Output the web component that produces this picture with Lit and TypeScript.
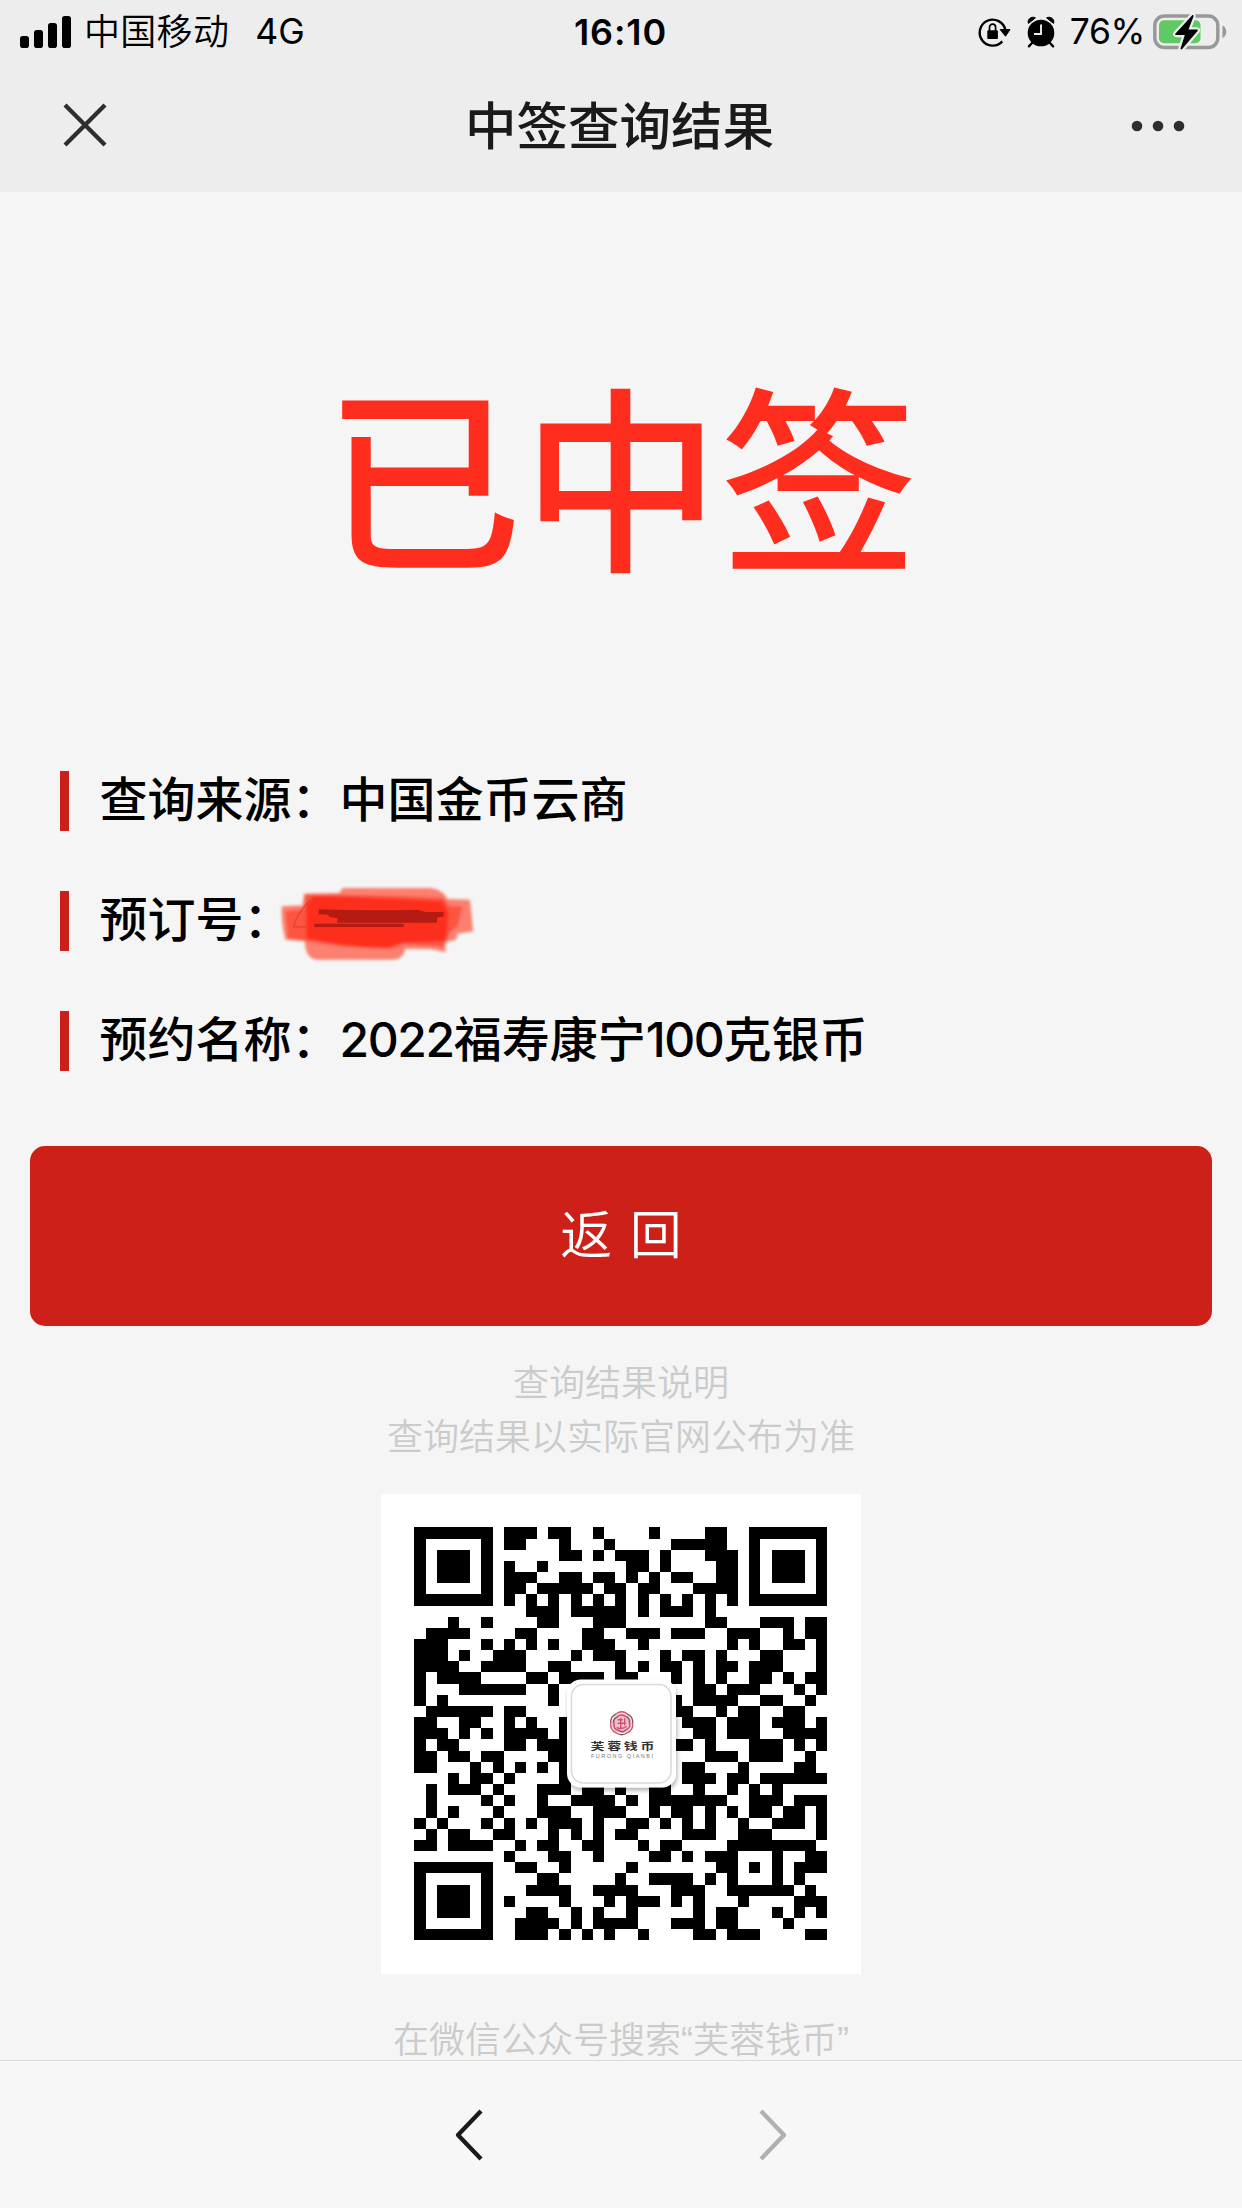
import { LitElement, html, css, svg } from "lit";
import { customElement, property } from "lit/decorators.js";

/* Dark modules of each QR row, written as column numbers and ranges. */
const QR_ROWS: string[] = [
  "0-6 8-10 12-13 16 21 26-27 30-36",
  "0 6 8-9 13 17 23-27 30 36",
  "0 2-4 6 13-14 16 18-20 22 26-28 30 32-34 36",
  "0 2-4 6 8 11 19-20 22 27-28 30 32-34 36",
  "0 2-4 6 8-10 13-14 16-17 19 21 23-24 27-28 30 32-34 36",
  "0 6 8-9 11-15 17-18 20-21 25-28 30 36",
  "0-6 8 10 12 14 16 18 20 22 24 26 28 30-36",
  "10-12 14-18 20 22-24 26",
  "3 6 11-12 16-18 26-27 31-33 35-36",
  "1-4 9-10 15-16 19-21 23-25 28-30 33 35-36",
  "0-2 6 8 10 12 15-17 20 28 30 33-34 36",
  "0-2 4 7-9 14 16-18 22 24-25 27 31-32 36",
  "0-3 6-9 12-13 18 20 22-23 25 27-28 30-32 36",
  "0 2-5 10-11 13-16 18-19 23 25 27 30-31 33 35-36",
  "0 4-9 12 25-26 28-30 34 36",
  "0 2 12 23 25-28 31-32 35",
  "1-6 8-9 23-24 27 29-30 33-34",
  "0-1 4-5 8 10 13 24-26 28-30 32-34 36",
  "0-2 4 6 8-11 13 25-26 28-30 33-36",
  "0 2-3 8-9 11-13 23-24 26 30-32 34 36",
  "0-1 3-4 6-7 12-13 26-28 30-32 35",
  "0-1 5 7 9 11 13 24-25 29 34-35",
  "3 5-6 8 13 24-26 28-29 31-36",
  "1 3-5 7 11-13 15-16 18 21-22 25 28 30 32",
  "1 6 8 11 14-17 19 21-27 30-32 34-36",
  "1 3 7 11-13 16-18 21 23-24 26 28 30-31 33-34 36",
  "0 2 6 8 10 12-14 16 19-20 22 24 26 29 32-34 36",
  "1 3-4 7-8 12 14 16 18-19 24-26 29-31 36",
  "0-1 3-6 9 11-12 15-16 20 22-23 28-35",
  "8 12-13 16 21-22 24 26-28 32 35-36",
  "0-6 9-10 13 19 27-28 30 32 34-36",
  "0 6 11-12 18 21-24 26 28 32 34",
  "0 2-4 6 10-13 16-19 23-25 28-33 35",
  "0 2-4 6 8 13 17 19-21 23 25 29 34-36",
  "0 2-4 6 10-11 14 16 19 25 27-28 32 34 36",
  "0 6 9-12 14 16-19 23-25 27-28 33",
  "0-6 9-11 13 15 17 20 25-26 28-30 35-36",
];

const qrPath = QR_ROWS.map((row, y) =>
  row
    .split(" ")
    .map((run) => {
      const [a, b = a] = run.split("-").map(Number);
      return `M${a} ${y}h${b - a + 1}v1h-${b - a + 1}z`;
    })
    .join("")
).join("");

@customElement("status-bar")
class StatusBar extends LitElement {
  static styles = css`
    :host {
      display: grid;
      grid-template-columns: 1fr auto 1fr;
      align-items: center;
      height: 62px;
      padding: 0 15px 0 20px;
      color: #000;
      font: 400 36px/62px Inter, "Noto Sans CJK SC", sans-serif;
    }
    span, .time { padding-top: 1px; }
    .left, .right { display: flex; align-items: center; }
    .right { justify-content: flex-end; }
    .signal { margin-right: 13px; }
    .carrier { font-weight: 350; letter-spacing: 0.3px; }
    .net { margin-left: 26px; font-size: 35.5px; }
    .time { font-weight: 600; font-size: 36px; letter-spacing: 0.9px; margin-left: -6px; }
    .lock { margin-right: 16px; }
    .alarm { margin-right: 15px; }
    .percent { font-size: 35.5px; letter-spacing: -0.4px; margin-right: 8px; }
    svg { display: block; flex: none; }
  `;
  render() {
    return html`
      <div class="left">
        <svg class="signal" width="51" height="34" viewBox="0 0 51 34">
          <rect x="0" y="21" width="9" height="12" rx="2.8" />
          <rect x="14" y="15" width="9" height="18" rx="2.8" />
          <rect x="28" y="8" width="9" height="25" rx="2.8" />
          <rect x="42" y="1" width="9" height="32" rx="2.8" />
        </svg>
        <span class="carrier">中国移动</span>
        <span class="net">4G</span>
      </div>
      <div class="time">16:10</div>
      <div class="right">
        <svg class="lock" width="34" height="34" viewBox="0 0 34 34">
          <path d="M25.3 26.4A13 13 0 1 1 28.4 15" fill="none" stroke="#000" stroke-width="2.400" />
          <path d="M23.200 14.600H33L28.500 21.200z" stroke="#000" stroke-linejoin="round" />
          <rect x="10.300" y="15.300" width="10.600" height="8.800" rx="1.200" />
          <path d="M12.500 16V12.200a3.050 3.050 0 0 1 6.100 0v3.800" fill="none" stroke="#000" stroke-width="1.700" />
        </svg>
        <svg class="alarm" width="28" height="32" viewBox="0 0 28 32">
          <circle cx="14" cy="17" r="13.300" />
          <path d="M1.500 7.400C-.3 3.600 4.600-.3 8.400 1.900ZM26.500 7.400C28.300 3.600 23.400-.3 19.600 1.900Z" stroke="#000" stroke-linejoin="round" />
          <path d="M5.500 26.500 1.900 30.300M22.500 26.500 26.100 30.300" stroke="#000" stroke-width="2.400" stroke-linecap="round" />
          <path d="M14 8.500V18H7" fill="none" stroke="#ededed" stroke-width="1.900" />
        </svg>
        <span class="percent">76%</span>
        <svg width="74" height="38" viewBox="0 0 74 38">
          <rect x="1.800" y="3" width="63" height="31.500" rx="9.500" fill="none" stroke="#98989b" stroke-width="3.400" />
          <rect x="6" y="7.200" width="41.500" height="23" rx="5" fill="#5fca63" />
          <path d="M69.500 12.500c5 2 5 10.500 0 12.500z" fill="#98989b" />
          <path d="M39 2.500 22.500 20.500c-.6.8-.4 1.400.6 1.400h8.700L27.600 35.300c-.3 1.200.8 1.500 1.600.7L44.500 18c.6-.8.3-1.500-.6-1.500h-8.400l4.900-12.800c.5-1.400-.5-2.100-1.400-1.200z"
            stroke="#ededed" stroke-width="4.500" paint-order="stroke" />
        </svg>
      </div>
    `;
  }
}

@customElement("title-bar")
class TitleBar extends LitElement {
  static styles = css`
    :host {
      display: grid;
      grid-template-columns: 1fr auto 1fr;
      align-items: center;
      height: 130px;
      padding: 0 57px 0 63px;
      box-sizing: border-box;
      color: #1a1a1a;
    }
    h1 {
      margin: 0 0 8px -9px;
      font: 500 51.500px/70px "Noto Sans CJK SC", sans-serif;
    }
    svg { display: block; margin-bottom: 4px; }
    .more { justify-self: end; margin-bottom: 3px; }
  `;
  render() {
    return html`
      <svg width="44" height="44" viewBox="0 0 44 44">
        <path d="M2 2 42 42M42 2 2 42" stroke="#2e2e2e" stroke-width="4.300" />
      </svg>
      <h1>中签查询结果</h1>
      <svg class="more" width="54" height="12" viewBox="0 0 54 12">
        ${[6, 27, 48].map((x) => svg`<circle cx=${x} cy="6" r="5.300" fill="#2e2e2e" />`)}
      </svg>
    `;
  }
}

@customElement("info-row")
class InfoRow extends LitElement {
  @property() label = "";
  @property() value = "";
  @property({ type: Boolean }) redacted = false;
  static styles = css`
    :host {
      display: flex;
      align-items: center;
      height: 60px;
      position: relative;
      border-left: 9px solid #cb2019;
      padding-left: 30.5px;
      font: 500 48px/58px Inter, "Noto Sans CJK SC", sans-serif;
      color: #000;
      white-space: nowrap;
    }
    .text { padding-bottom: 3px; }
    .num { letter-spacing: -1.400px; }
    .scribble { position: absolute; left: 207px; top: -8px; }
  `;
  render() {
    const parts = this.value.split(/(\d+)/).filter(Boolean);
    return html`
      <span class="text">${this.label}：${parts.map((p) => (/\d/.test(p) ? html`<span class="num">${p}</span>` : p))}</span>
      ${this.redacted
        ? html`<svg class="scribble" width="203.300" height="83.300" viewBox="740 430 610 250">
            <defs><filter id="soft"><feGaussianBlur stdDeviation="4" /></filter></defs>
            <g filter="url(#soft)">
              <path d="M940 445H1205Q1240 450 1255 478L1322 480 1332 575 1285 582 1280 602 1250 606 1248 638 1205 628 1128 628Q1122 660 1090 660H860Q828 655 826 604L768 600Q755 550 757 500L820 497 824 462 930 460Z" fill="#fb8070" />
              <path d="M828 464 1110 468 1240 474 1262 500 1300 500 1285 560 1265 575 1250 605 1240 622 1130 612 1080 628 950 622 840 606 775 596 768 515 822 508Z" fill="#fd5440" />
              <path d="M850 468Q1000 470 1240 484L1258 520 1250 604 1120 610 1070 626Q940 622 830 596V500Z" fill="#fe2e1e" />
            </g>
            <path d="M842 482Q800 525 792 562H830" fill="none" stroke="#d53427" stroke-width="5" opacity=".5" />
            <path d="M868 509Q1020 514 1165 510L1190 517 1243 517V530L1223 534V549H924V536L898 531 897 525 868 524ZM855 552H1123V562H855Z" fill="#b51b12" />
          </svg>`
        : null}
    `;
  }
}

@customElement("qr-card")
class QrCard extends LitElement {
  static styles = css`
    :host { display: block; width: 480px; height: 480px; background: #fff; }
    svg { display: block; }
    .brand { font: 700 14px "Noto Sans CJK SC", sans-serif; }
    .latin { font: 400 5.500px "Liberation Sans", sans-serif; }
  `;
  render() {
    return html`
      <svg width="480" height="480" viewBox="381 1494 480 480">
        <defs>
          <filter id="shadow" x="-20%" y="-20%" width="140%" height="140%">
            <feDropShadow dx="1" dy="3" stdDeviation="2" flood-color="#000" flood-opacity=".3" />
          </filter>
        </defs>
        <path d=${qrPath} transform="translate(414.400 1527.400) scale(11.160)" shape-rendering="crispEdges" />
        <rect x="567" y="1679.500" width="109" height="108" rx="14" fill="#fff" filter="url(#shadow)" />
        <rect x="571.500" y="1684.500" width="99.500" height="98.500" rx="12" fill="#fff" stroke="#d9d9d9" stroke-width="1.500" />
        <g fill="none" stroke="#c9526f" stroke-width="1.400" transform="translate(621.700 1723.300)">
          <circle r="10" fill="#f3bccb" stroke="none" />
          ${[0, 60, 120, 180, 240, 300].map(
            (a) => svg`<path d="M-5.500-9.500Q0-13.500 5.500-9.500M-4-7Q0-10 4-6.500" transform="rotate(${a})" stroke=${a % 120 ? "#8e5262" : "#c9526f"} />`
          )}
          <path d="M-4-3.500H1M-4 0H4M-1-5V5M3-5V2M-5 4Q0 7 5 3" />
        </g>
        <text class="brand" transform="translate(590.500 1749.600) scale(1 .72)" textLength="64" fill="#333">芙蓉钱币</text>
        <text class="latin" x="591" y="1757.500" textLength="62" fill="#777">FURONG QIANBI</text>
      </svg>
    `;
  }
}

@customElement("nav-bar")
class NavBar extends LitElement {
  static styles = css`
    :host {
      display: flex;
      justify-content: center;
      align-items: center;
      gap: 274px;
      height: 148px;
      box-sizing: border-box;
      border-top: 1px solid #dadada;
      background: #f7f7f7;
    }
    svg { display: block; }
  `;
  render() {
    return html`
      <svg width="30" height="54" viewBox="0 0 30 54">
        <path d="M27 3 4 27 27 51" fill="none" stroke="#1a1a1a" stroke-width="4.300" stroke-linejoin="round" />
      </svg>
      <svg width="30" height="54" viewBox="0 0 30 54">
        <path d="M3 3 26 27 3 51" fill="none" stroke="#b0b0b0" stroke-width="4.300" stroke-linejoin="round" />
      </svg>
    `;
  }
}

@customElement("app-root")
class AppRoot extends LitElement {
  static styles = css`
    :host {
      display: flex;
      flex-direction: column;
      height: 2208px;
      overflow: hidden;
      background: #f5f5f5;
      font-family: Inter, "Noto Sans CJK SC", sans-serif;
    }
    header { background: #ededed; flex: none; }
    main {
      flex: 1;
      min-height: 0;
      display: flex;
      flex-direction: column;
      padding: 0 30px;
    }
    .result {
      margin: 133px 0 0;
      height: 290px;
      text-align: center;
      color: #ff2d1e;
      font: 500 198px/290px "Noto Sans CJK SC", sans-serif;
    }
    .rows {
      display: flex;
      flex-direction: column;
      gap: 60px;
      margin: 156px 30px 75px;
    }
    button {
      flex: none;
      height: 180px;
      border: 0;
      border-radius: 15px;
      background: #cd2018;
      color: #fff;
      font: 350 52px/180px Inter, "Noto Sans CJK SC", sans-serif;
      word-spacing: 3px;
      padding: 0;
    }
    .note {
      margin: 31px 0 0;
      text-align: center;
      color: #cbcbcb;
      font: 350 36px/54px "Liberation Sans", "Noto Sans CJK SC", sans-serif;
    }
    qr-card { margin: 29px auto 0; flex: none; }
    .search { margin-top: 46px; line-height: 42px; }
    nav-bar { flex: none; }
  `;
  render() {
    return html`
      <header>
        <status-bar></status-bar>
        <title-bar></title-bar>
      </header>
      <main>
        <div class="result">已中签</div>
        <div class="rows">
          <info-row label="查询来源" value="中国金币云商"></info-row>
          <info-row label="预订号" redacted></info-row>
          <info-row label="预约名称" value="2022福寿康宁100克银币"></info-row>
        </div>
        <button>返 回</button>
        <div class="note">查询结果说明<br />查询结果以实际官网公布为准</div>
        <qr-card></qr-card>
        <div class="note search">在微信公众号搜索“芙蓉钱币”</div>
      </main>
      <nav-bar></nav-bar>
    `;
  }
}
